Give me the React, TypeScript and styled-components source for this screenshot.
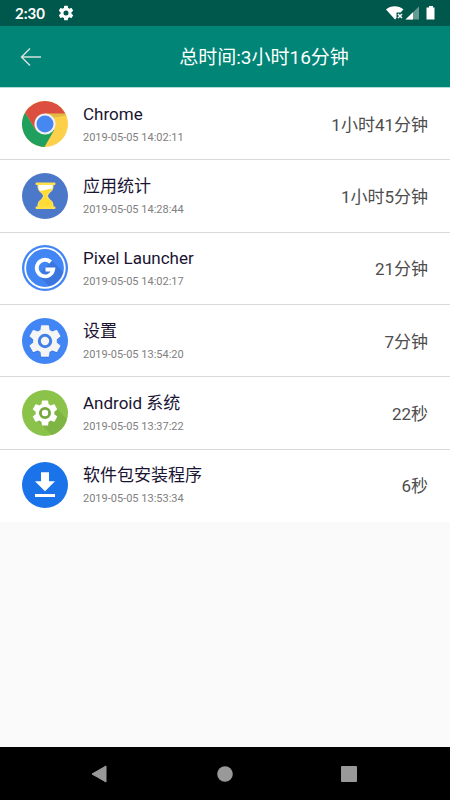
import React from 'react';
import styled, { createGlobalStyle } from 'styled-components';

const GlobalStyle = createGlobalStyle`
  * { box-sizing: border-box; }
  body { margin: 0; background: #fafafa; }
  body, button { font-family: Roboto, "Noto Sans CJK SC", sans-serif; }
`;

const Screen = styled.div`
  min-height: 100vh;
  display: flex;
  flex-direction: column;
  background: #fafafa;
`;

const StatusBar = styled.div`
  height: 26px;
  padding: 0 14px 0 15px;
  display: flex;
  align-items: center;
  justify-content: space-between;
  background: #00574b;
  color: #fff;
`;

const StatusGroup = styled.div<{ $gap: number }>`
  display: flex;
  align-items: center;
  gap: ${(p) => p.$gap}px;
`;

const Clock = styled.time`
  font: 700 15px/20px Lato, sans-serif;
`;

const Header = styled.header`
  height: 62px;
  display: flex;
  align-items: center;
  background: #008577;
  border-bottom: 1px solid #b3dad6;
`;

const BackButton = styled.button`
  width: 78px;
  height: 61px;
  padding: 0 0 0 20px;
  display: flex;
  align-items: center;
  border: 0;
  background: none;
  cursor: pointer;
`;

const Title = styled.h1`
  flex: 1;
  margin: 0;
  padding-top: 2px;
  text-align: center;
  font-size: 19px;
  line-height: 28px;
  font-weight: 400;
  color: #fff;
`;

const AppList = styled.ul`
  margin: 0;
  padding: 0;
  list-style: none;
  display: grid;
  grid-auto-rows: 1fr;
  min-height: 434px;
  background: #fff;
`;

const AppRow = styled.li`
  padding: 0 22px;
  display: flex;
  align-items: center;
  gap: 15px;
  border-bottom: 1px solid #d9d9d9;
  &:last-child { border-bottom-color: transparent; }
`;

const AppInfo = styled.div`
  flex: 1;
  min-width: 0;
  padding-top: 2px;
`;

const AppName = styled.div`
  font-size: 17px;
  line-height: 26px;
  color: #1a1433;
`;

const LastUsed = styled.time`
  display: block;
  font-size: 11px;
  line-height: 22px;
  color: #808080;
`;

const Duration = styled.div`
  padding-top: 2px;
  font-size: 17px;
  line-height: 26px;
  color: #4d4d4d;
  white-space: nowrap;
`;

const NavBar = styled.nav`
  height: 53px;
  margin-top: auto;
  padding: 0 37px;
  display: grid;
  grid-template-columns: repeat(3, 1fr);
  background: #000;
`;

const NavButton = styled.button`
  display: flex;
  align-items: center;
  justify-content: center;
  padding: 0;
  border: 0;
  background: none;
  cursor: pointer;
`;

const AppIcon = styled.svg`
  flex: none;
  width: 46px;
  height: 46px;
`;

const GEAR =
  'M19.14 12.94c.04-.3.06-.61.06-.94s-.02-.64-.07-.94l2.03-1.58a.49.49 0 0 0 .12-.61l-1.92-3.32a.49.49 0 0 0-.59-.22l-2.39.96c-.5-.38-1.03-.7-1.62-.94l-.36-2.54a.48.48 0 0 0-.48-.41h-3.84a.47.47 0 0 0-.47.41l-.36 2.54c-.59.24-1.13.57-1.62.94l-2.39-.96a.48.48 0 0 0-.59.22L2.74 8.87a.47.47 0 0 0 .12.61l2.03 1.58c-.05.3-.09.63-.09.94s.02.64.07.94l-2.03 1.58a.49.49 0 0 0-.12.61l1.92 3.32c.12.22.37.29.59.22l2.39-.96c.5.38 1.03.7 1.62.94l.36 2.54c.05.24.24.41.48.41h3.84c.24 0 .44-.17.47-.41l.36-2.54c.59-.24 1.13-.56 1.62-.94l2.39.96c.22.08.47 0 .59-.22l1.92-3.32a.47.47 0 0 0-.12-.61z';

const ChromeIcon = () => (
  <AppIcon viewBox="0 0 46 46" aria-hidden="true">
    <circle cx="23" cy="23" r="23" fill="#fcd04b" />
    <path d="M3.08 11.5A23 23 0 0 0 22.5 46L32.5 28.5 23 33.5 13.5 28.5Z" fill="#1fa05f" />
    <path d="M3.08 11.5A23 23 0 0 1 43.4 12.5H23L23 23 13.5 28.5Z" fill="#db4e40" />
    <path d="M23 12.5H43.4l.9 2L30 17Z" fill="#000" opacity=".1" />
    <circle cx="23" cy="23" r="10.6" fill="#f1f1f1" />
    <circle cx="23" cy="23" r="8.5" fill="#4787f1" />
  </AppIcon>
);

const HourglassIcon = () => (
  <AppIcon viewBox="0 0 46 46" aria-hidden="true">
    <circle cx="23" cy="23" r="23" fill="#4c78c9" />
    <path d="M16 11.5h15v3c0 4-5.6 5.6-5.6 8.5S31 27.5 31 31.5v3H16v-3c0-4 5.6-5.6 5.6-8.5S16 18.5 16 14.5Z" fill="#fff" stroke="#f6dc6b" />
    <path d="M17.2 18.2 30 15.5c-.8 3.2-5.1 4.8-5.1 7.5s5.6 4.500 5.6 8.500v3h-14v-3c0-4 5.600-5.800 5.600-8.500 0-2-3.300-3.200-4.900-4.800Z" fill="#ffdc35" />
    <rect x="13.5" y="9.5" width="20" height="2.5" rx="1" fill="#ffe14c" />
    <rect x="13.5" y="33.5" width="20" height="2.5" rx="1" fill="#ffe14c" />
  </AppIcon>
);

const LauncherIcon = () => (
  <AppIcon viewBox="0 0 46 46" aria-hidden="true">
    <circle cx="23" cy="23" r="23" fill="#4285f4" />
    <path d="M30 16 41 27A18.5 18.5 0 0 1 27 41L16 30Z" fill="#3a76de" />
    <circle cx="23" cy="23" r="19.8" fill="none" stroke="#fff" strokeWidth="1.8" />
    <path d="M28.7 17A8.3 8.3 0 1 0 31.200 24.500H23.500" fill="none" stroke="#fff" strokeWidth="3.800" />
  </AppIcon>
);

const SettingsIcon = () => (
  <AppIcon viewBox="0 0 46 46" aria-hidden="true">
    <circle cx="23" cy="23" r="23" fill="#4285f4" />
    <g transform="translate(3.2 4) scale(1.65)">
      <path d={GEAR} fill="#3267c4" opacity=".6" />
    </g>
    <g transform="translate(3.2 3.2) scale(1.65)">
      <path d={GEAR} fill="#f5f5f5" />
    </g>
    <circle cx="23" cy="23" r="5.7" fill="#f5f5f5" stroke="#4280e8" strokeWidth="3" />
  </AppIcon>
);

const SystemIcon = () => (
  <AppIcon viewBox="0 0 46 46" aria-hidden="true">
    <circle cx="23" cy="23" r="23" fill="#8bc34a" />
    <path d="M33 16 44.8 29.8A23 23 0 0 1 30 45L15.5 31Z" fill="#7fb544" />
    <g transform="translate(7.4 7.4) scale(1.3)">
      <path d={GEAR} fill="#fff" />
    </g>
    <circle cx="23" cy="23" r="4.6" fill="#fff" stroke="#76a83f" strokeWidth="2.8" />
  </AppIcon>
);

const InstallerIcon = () => (
  <AppIcon viewBox="0 0 46 46" aria-hidden="true">
    <circle cx="23" cy="23" r="23" fill="#1a73e8" />
    <path d="M19 10.3h8v9h6L23 29.2 13 19.3h6ZM13 32h20v3H13Z" fill="#fff" />
  </AppIcon>
);

const apps = [
  { name: 'Chrome', time: '2019-05-05 14:02:11', duration: '1小时41分钟', Icon: ChromeIcon },
  { name: '应用统计', time: '2019-05-05 14:28:44', duration: '1小时5分钟', Icon: HourglassIcon },
  { name: 'Pixel Launcher', time: '2019-05-05 14:02:17', duration: '21分钟', Icon: LauncherIcon },
  { name: '设置', time: '2019-05-05 13:54:20', duration: '7分钟', Icon: SettingsIcon },
  { name: 'Android 系统', time: '2019-05-05 13:37:22', duration: '22秒', Icon: SystemIcon },
  { name: '软件包安装程序', time: '2019-05-05 13:53:34', duration: '6秒', Icon: InstallerIcon },
];

export default function App() {
  return (
    <Screen>
      <GlobalStyle />
      <StatusBar>
        <StatusGroup $gap={13}>
          <Clock>2:30</Clock>
          <svg width="16" height="16" viewBox="1.5 1.5 21 21" aria-hidden="true">
            <path
              fillRule="evenodd"
              fill="#fff"
              d={GEAR + 'M12 15.3a3.3 3.3 0 1 1 0-6.6 3.3 3.3 0 0 1 0 6.6z'}
            />
          </svg>
        </StatusGroup>
        <svg width="50" height="16" viewBox="0 0 50 16" aria-hidden="true">
          <path d="M0 4.5C5 .2 12.5.2 17.5 4.5L14.5 7.5H10.5V13L9 14.5Z" fill="#fff" />
          <path d="m12 9 4 4m0-4-4 4" stroke="#fff" strokeWidth="1.5" />
          <path d="M33 1.5V14.5H19.5Z" fill="#fff" opacity=".4" />
          <path d="M27 7.3v7.2h-7.5Z" fill="#fff" />
          <path d="M43 1h4v1.5h1.5V14.5h-8V2.5H43Z" fill="#fff" />
        </svg>
      </StatusBar>
      <Header>
        <BackButton type="button" aria-label="返回">
          <svg width="22" height="20" viewBox="0 0 22 20" aria-hidden="true">
            <path d="M21 10H1.5M10 1.5 1.5 10l8.5 8.5" fill="none" stroke="#d5dfdc" strokeWidth="1.5" />
          </svg>
        </BackButton>
        <Title>总时间:3小时16分钟</Title>
      </Header>
      <AppList>
        {apps.map(({ name, time, duration, Icon }) => (
          <AppRow key={name}>
            <Icon />
            <AppInfo>
              <AppName>{name}</AppName>
              <LastUsed>{time}</LastUsed>
            </AppInfo>
            <Duration>{duration}</Duration>
          </AppRow>
        ))}
      </AppList>
      <NavBar>
        <NavButton type="button" aria-label="返回上一页">
          <svg width="18" height="18" viewBox="0 0 18 18" aria-hidden="true">
            <path d="M15 1v16L1 9Z" fill="#999" stroke="#999" strokeLinejoin="round" />
          </svg>
        </NavButton>
        <NavButton type="button" aria-label="主屏幕">
          <svg width="16" height="16" viewBox="0 0 16 16" aria-hidden="true">
            <circle cx="8" cy="8" r="7.8" fill="#999" />
          </svg>
        </NavButton>
        <NavButton type="button" aria-label="最近任务">
          <svg width="18" height="18" viewBox="0 0 18 18" aria-hidden="true">
            <rect y="1" width="16" height="16" rx="1" fill="#999" />
          </svg>
        </NavButton>
      </NavBar>
    </Screen>
  );
}
